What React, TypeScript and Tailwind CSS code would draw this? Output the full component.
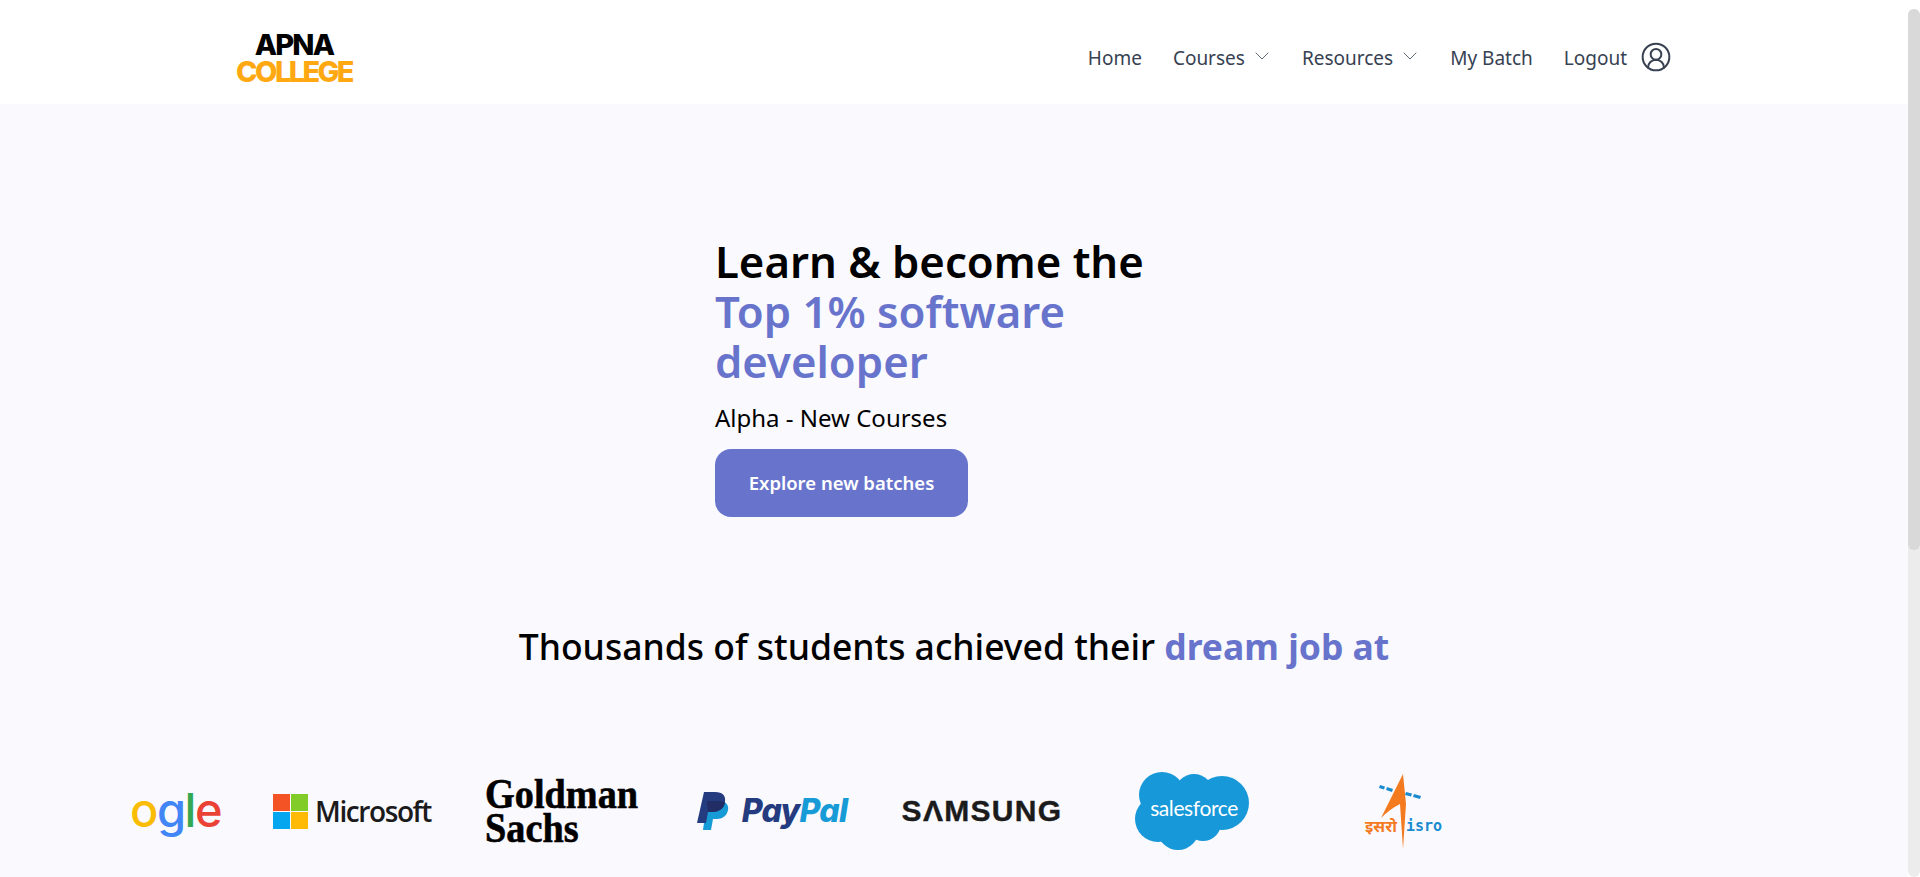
import React from 'react';
import { ChevronDown, CircleUserRound } from 'lucide-react';

const font = { fontFamily: '"Noto Sans", sans-serif' };

function Logo() {
  return (
    <div className="flex flex-col items-center w-[116px] font-['Inter',sans-serif] font-extrabold">
      <span className="text-[29px] leading-[27px] tracking-[-1.8px] text-black">APNA</span>
      <span className="text-[29px] leading-[27px] tracking-[-2.6px] text-[#ffa812]">COLLEGE</span>
    </div>
  );
}

function NavItem({ label, caret }: { label: string; caret?: boolean }) {
  return (
    <a className="flex items-center text-[19px] text-[#374151]">
      {label}
      {caret && <ChevronDown className="w-[24px] h-[24px] ml-[5px] -mr-[3px] -mt-1" strokeWidth={0.8} />}
    </a>
  );
}

function Google() {
  return (
    <div className="w-[117px] h-full flex items-center justify-end overflow-hidden pr-[26px]">
      <span className="shrink-0 text-[47px] font-['Inter',sans-serif] font-medium tracking-[-1.5px] leading-none -mt-1">
        <span className="text-[#ea4335]">o</span>
        <span className="text-[#fbbc05]">o</span>
        <span className="text-[#4285f4]">g</span>
        <span className="text-[#34a853]">l</span>
        <span className="text-[#ea4335]">e</span>
      </span>
    </div>
  );
}

function Microsoft() {
  return (
    <div className="w-[210px] flex items-center justify-center gap-[7px]">
      <div className="grid grid-cols-2 gap-px w-[35px] h-[35px] shrink-0">
        <div className="bg-[#f35325]" />
        <div className="bg-[#81cc28]" />
        <div className="bg-[#05a6f0]" />
        <div className="bg-[#ffba08]" />
      </div>
      <span className="text-[28px] font-semibold tracking-[-1.4px] text-[#1b1b1b] font-['Open_Sans',sans-serif]">Microsoft</span>
    </div>
  );
}

function Goldman() {
  return (
    <div className="w-[210px] flex justify-center">
      <div className="w-[155px] origin-left scale-x-[0.89] font-['Liberation_Serif',serif] font-bold text-black text-[43px] leading-[34px] whitespace-nowrap [-webkit-text-stroke:0.6px_black]">
        Goldman
        <br />
        Sachs
      </div>
    </div>
  );
}

function PayPal() {
  return (
    <div className="w-[210px] flex items-center justify-center gap-[13px]">
      <svg width="32" height="38" viewBox="0 0 32 38" className="shrink-0">
        <path d="M10 9h12c7 0 10 4 9 9-1 6-6 9-11 9h-4l-2 11H6z" fill="#179bd7" />
        <path d="M7 0h11c8 0 11 4 10 10-1 7-7 10-13 10h-4l-2 11H0z" fill="#253b80" />
        <path d="M10 9h12c3 0 5 .6 6 2-1 6-7 9-13 9h-4z" fill="#222d65" />
      </svg>
      <span className="text-[32px] font-['Inter',sans-serif] font-extrabold italic tracking-[-0.8px] leading-none">
        <span className="text-[#253b80]">Pay</span>
        <span className="text-[#179bd7]">Pal</span>
      </span>
    </div>
  );
}

function Samsung() {
  return (
    <div className="w-[210px] flex justify-center">
      <span className="text-[30px] font-['Liberation_Sans',sans-serif] font-bold tracking-[1.3px] text-[#1b1b1b] leading-none [-webkit-text-stroke:0.4px_#1b1b1b]">SΛMSUNG</span>
    </div>
  );
}

function Salesforce() {
  return (
    <div className="w-[210px] flex justify-center">
      <div className="relative w-[116px] h-[80px]">
        <svg width="116" height="80" viewBox="0 0 116 80" fill="#1798d8">
          <circle cx="28" cy="24" r="23" />
          <circle cx="60" cy="22" r="19" />
          <circle cx="88" cy="32" r="27" />
          <circle cx="24" cy="48" r="23" />
          <circle cx="44" cy="58" r="21" />
          <circle cx="69" cy="52" r="18" />
          <rect x="25" y="22" width="70" height="32" />
        </svg>
        <span className="absolute inset-0 flex items-center justify-center text-[21px] tracking-[-0.4px] text-white font-['Lato',sans-serif] -mt-[7px] ml-[4px]">
          salesforce
        </span>
      </div>
    </div>
  );
}

function Isro() {
  return (
    <div className="w-[210px] flex justify-center">
      <div className="relative w-[84px] h-[80px]">
        <svg width="84" height="80" viewBox="0 0 84 80">
          <path d="M43 3 L21 47 Q30 38 40 33 L43 78 L46 33 Z" fill="#f47a1f" />
          <path d="M20 14l5 1.5-1 3-5-1.5zM27 16l6 2-1 3-6-2zM46 21l6 1.5-1 3-6-1.5zM54 23l7 2-1 3-7-2z" fill="#1b8bd0" />
        </svg>
        <span className="absolute left-[5px] top-[45px] text-[16px] leading-[20px] font-bold text-[#f47a1f]">इसरो</span>
        <span className="absolute left-[46px] top-[45px] text-[15px] leading-[20px] font-bold text-[#1b8bd0] font-['DejaVu_Sans_Mono',monospace]">isro</span>
      </div>
    </div>
  );
}

export default function App() {
  return (
    <div style={font} className="h-screen overflow-hidden flex bg-[#f9f9fe]">
      <main className="flex-1 min-w-0">
        {/* Navbar */}
        <header className="bg-white h-[104px] pt-3 flex items-center">
          <div className="w-[1436px] mx-auto flex items-center justify-between">
            <Logo />
            <nav className="flex items-center">
              <div className="flex items-center gap-[31px]">
                <NavItem label="Home" />
                <NavItem label="Courses" caret />
                <NavItem label="Resources" caret />
                <NavItem label="My Batch" />
                <NavItem label="Logout" />
              </div>
              <CircleUserRound className="w-[32px] h-[32px] ml-[13px] -mt-[2px] text-[#374151]" strokeWidth={1.5} />
            </nav>
          </div>
        </header>

        {/* Hero */}
        <section className="w-[478px] mx-auto pt-[132px]">
          <h1 className="text-[43.7px] leading-[50px] font-semibold text-black">
            Learn &amp; become the
            <br />
            <span className="text-[#6874cc]">Top 1% software developer</span>
          </h1>
          <p className="mt-[16px] text-[24px] leading-[32px] text-black">Alpha - New Courses</p>
          <button className="mt-[15px] w-[253px] h-[68px] rounded-[16px] bg-[#6874cc] text-white text-[18.5px] font-semibold">
            Explore new batches
          </button>
        </section>

        <h2 className="mt-[105px] text-center text-[35.5px] leading-[48px] font-medium text-black">
          Thousands of students achieved their <span className="font-bold text-[#6874cc]">dream job at</span>
        </h2>

        {/* Company logos */}
        <div className="mt-[100px] ml-[130px] h-[82px] flex items-center">
          <Google />
          <Microsoft />
          <Goldman />
          <PayPal />
          <Samsung />
          <Salesforce />
          <Isro />
        </div>
      </main>

      {/* Scrollbar */}
      <div className="w-[12px] shrink-0 bg-white pt-[9px]">
        <div className="h-full bg-[#ececec] rounded-[6px]">
          <div className="h-[541px] bg-[#d9d9d9] rounded-[6px]" />
        </div>
      </div>
    </div>
  );
}
